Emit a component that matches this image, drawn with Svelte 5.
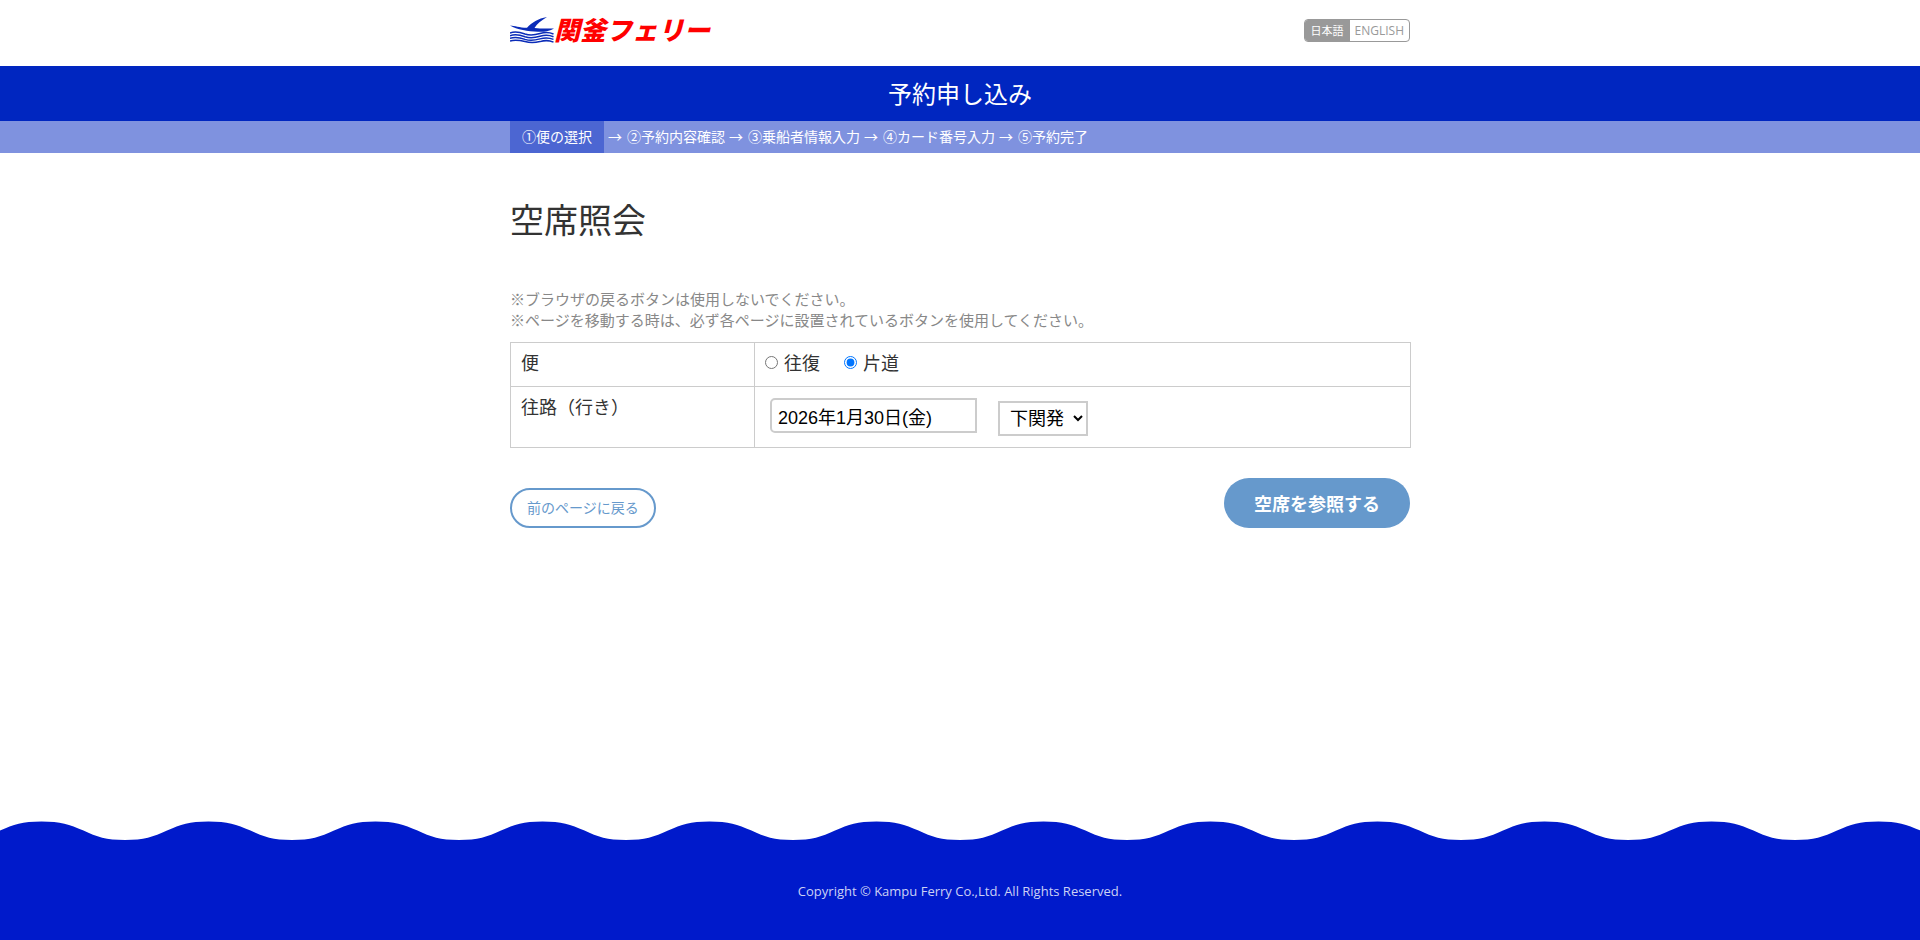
<script>
  const steps = ['②予約内容確認', '③乗船者情報入力', '④カード番号入力', '⑤予約完了'];
  let trip = $state('oneway');
  let date = $state('2026年1月30日(金)');
  let port = $state('shimonoseki');
</script>

<div class="page">
  <header class="inner header">
    <a class="logo" href="#top">
      <svg viewBox="0 0 44 28" aria-hidden="true">
        <path fill="#0b2cb8" d="M0 9.500 C5 10 9 11.500 17 11.800 C22 6.500 28 2.500 37 1 C31 4.500 27 8 24.500 12 C31 12.800 37 12.500 44 12.500 C40 15 35 16 28 15.800 C18 15.500 7 13.500 0 9.500Z" />
        <g fill="none" stroke="#0b2cb8" stroke-width="1.500">
          <path d="M0 17 C5 15.200 10 16.200 15 18 C21 20 25 19 30 17.500 C35 16 40 16.500 43.500 18" />
          <path d="M0 19.700 C5 17.900 10 18.900 15 20.700 C21 22.700 25 21.700 30 20.200 C35 18.700 40 19.200 43.500 20.700" />
          <path d="M0 22.400 C5 20.600 10 21.600 15 23.400 C21 25.400 25 24.400 30 22.900 C35 21.400 40 21.900 43.500 23.400" />
          <path d="M0 25.100 C5 23.300 10 24.300 15 25.600 C21 27.200 25 26.700 30 25.600 C35 24.100 40 24.600 43.500 26.100" />
        </g>
      </svg>
      <span>関釜フェリー</span>
    </a>
    <nav class="lang" aria-label="言語">
      <a class="current" href="#ja">日本語</a>
      <a href="#en">ENGLISH</a>
    </nav>
  </header>

  <div class="title">予約申し込み</div>

  <div class="steps">
    <ol class="inner">
      <li class="active">①便の選択</li>
      {#each steps as step}
        <li><span class="arrow">→</span>{step}</li>
      {/each}
    </ol>
  </div>

  <main class="inner">
    <h1>空席照会</h1>
    <p class="note">※ブラウザの戻るボタンは使用しないでください。<br />※ページを移動する時は、必ず各ページに設置されているボタンを使用してください。</p>

    <form onsubmit={(e) => e.preventDefault()}>
      <table>
        <tbody>
          <tr>
            <th scope="row">便</th>
            <td>
              <div class="radios">
                <label><input type="radio" name="trip" value="round" bind:group={trip} />往復</label>
                <label><input type="radio" name="trip" value="oneway" bind:group={trip} />片道</label>
              </div>
            </td>
          </tr>
          <tr>
            <th scope="row">往路（行き）</th>
            <td>
              <div class="fields">
                <input type="text" aria-label="往路の日付" bind:value={date} />
                <select aria-label="出発地" bind:value={port}>
                  <option value="shimonoseki">下関発</option>
                  <option value="busan">釜山発</option>
                </select>
              </div>
            </td>
          </tr>
        </tbody>
      </table>
      <div class="actions">
        <button type="button" class="back">前のページに戻る</button>
        <button type="submit" class="submit">空席を参照する</button>
      </div>
    </form>
  </main>

  <footer>
    <svg class="wave" aria-hidden="true">
      <defs>
        <pattern id="wave" width="167" height="20" patternUnits="userSpaceOnUse">
          <path fill="#001acb" d="M0 9.500 C14 3.500 22 0.500 41.500 0.500 C61 0.500 69 3.500 83.500 9.500 C97 16 106 19 125 19 C144 19 153 16 167 9.500 V20 H0Z" />
        </pattern>
      </defs>
      <rect width="100%" height="20" fill="url(#wave)" />
    </svg>
    <p>Copyright © Kampu Ferry Co.,Ltd. All Rights Reserved.</p>
  </footer>
</div>

<style>
  :global(body) {
    margin: 0;
  }

  .page {
    min-height: 100vh;
    display: flex;
    flex-direction: column;
    background: #fff;
    color: #333;
    font-family: 'Noto Sans CJK JP', sans-serif;
    font-size: 18px;
  }

  .page * {
    box-sizing: border-box;
  }

  .inner {
    width: 100%;
    max-width: 900px;
    margin: 0 auto;
  }

  a {
    color: inherit;
    text-decoration: none;
  }

  .header {
    display: flex;
    justify-content: space-between;
    align-items: flex-start;
    height: 66px;
    padding-top: 16px;
  }

  .logo {
    display: flex;
    align-items: flex-start;
    color: #f00;
    font-size: 26px;
    font-weight: 900;
    font-style: italic;
    line-height: 26px;
  }

  .logo svg {
    width: 44px;
    height: 28px;
  }

  .lang {
    display: flex;
    margin-top: 3px;
    border: 1px solid #999;
    border-radius: 4px;
    overflow: hidden;
    color: #999;
    font-size: 11px;
    line-height: 21px;
  }

  .lang a {
    padding: 0 5px;
    font-family: 'Open Sans', sans-serif;
    font-size: 12px;
  }

  .lang .current {
    padding: 0 6px;
    background: #999;
    color: #fff;
    font-family: 'Noto Sans CJK JP', sans-serif;
    font-size: 11px;
  }

  .title {
    padding-bottom: 2px;
    background: #0026c0;
    color: #fff;
    font-size: 24px;
    line-height: 53px;
    text-align: center;
  }

  .steps {
    background: #7f92df;
    color: #fff;
    font-size: 14px;
    line-height: 30px;
  }

  .steps ol {
    display: flex;
    flex-wrap: wrap;
    padding: 0;
    list-style: none;
  }

  .steps li {
    padding-bottom: 2px;
  }

  .steps .active {
    padding: 0 12px 2px;
    background: #4c66d2;
  }

  .arrow {
    margin: 0 5px 0 4px;
  }

  h1 {
    margin: 41px 0 44px;
    font-size: 34px;
    font-weight: 400;
    line-height: 50px;
  }

  .note {
    margin: 0 0 12px;
    color: #888;
    font-size: 15px;
    line-height: 21px;
  }

  table {
    width: calc(100% + 1px);
    border-collapse: collapse;
  }

  th,
  td {
    padding: 6px 10px 10px;
    border: 1px solid #ccc;
    font-weight: 400;
    line-height: 27px;
    text-align: left;
    vertical-align: top;
  }

  th {
    width: 244px;
  }

  .radios {
    display: flex;
    gap: 24px;
  }

  label {
    display: flex;
    align-items: center;
    gap: 6px;
  }

  input[type='radio'] {
    width: 13px;
    height: 13px;
    margin: 0;
  }

  .fields {
    display: flex;
    gap: 21px;
    padding: 5px 5px 1px;
  }

  .fields input,
  select {
    border: 2px solid #ccc;
    background: #fff;
    color: #000;
    height: 35px;
    font-family: 'Liberation Sans', 'Noto Sans CJK JP', sans-serif;
    font-size: 18px;
  }

  .fields input {
    width: 207px;
    padding: 0 6px;
    border-radius: 5px 0 0 5px;
  }

  select {
    width: 90px;
    margin-top: 3px;
    padding: 0 0 0 6px;
    border-radius: 0;
  }

  .actions {
    display: flex;
    justify-content: space-between;
    align-items: flex-end;
    margin-top: 30px;
  }

  button {
    font-family: inherit;
    border-radius: 25px;
    cursor: pointer;
  }

  .back {
    height: 40px;
    padding: 0 15px 2px;
    border: 2px solid #69c;
    background: #fff;
    color: #69c;
    font-size: 14px;
  }

  .submit {
    height: 50px;
    padding: 0 30px;
    border: 0;
    background: #69c;
    color: #fff;
    font-size: 18px;
    font-weight: 700;
  }

  footer {
    margin-top: auto;
    color: #ccd1f5;
    font-family: 'Open Sans', sans-serif;
    font-size: 13px;
    text-align: center;
  }

  .wave {
    display: block;
    width: 100%;
    height: 20px;
  }

  footer p {
    margin: 0;
    padding: 40px 0 39px;
    background: #001acb;
    line-height: 20px;
  }
</style>
